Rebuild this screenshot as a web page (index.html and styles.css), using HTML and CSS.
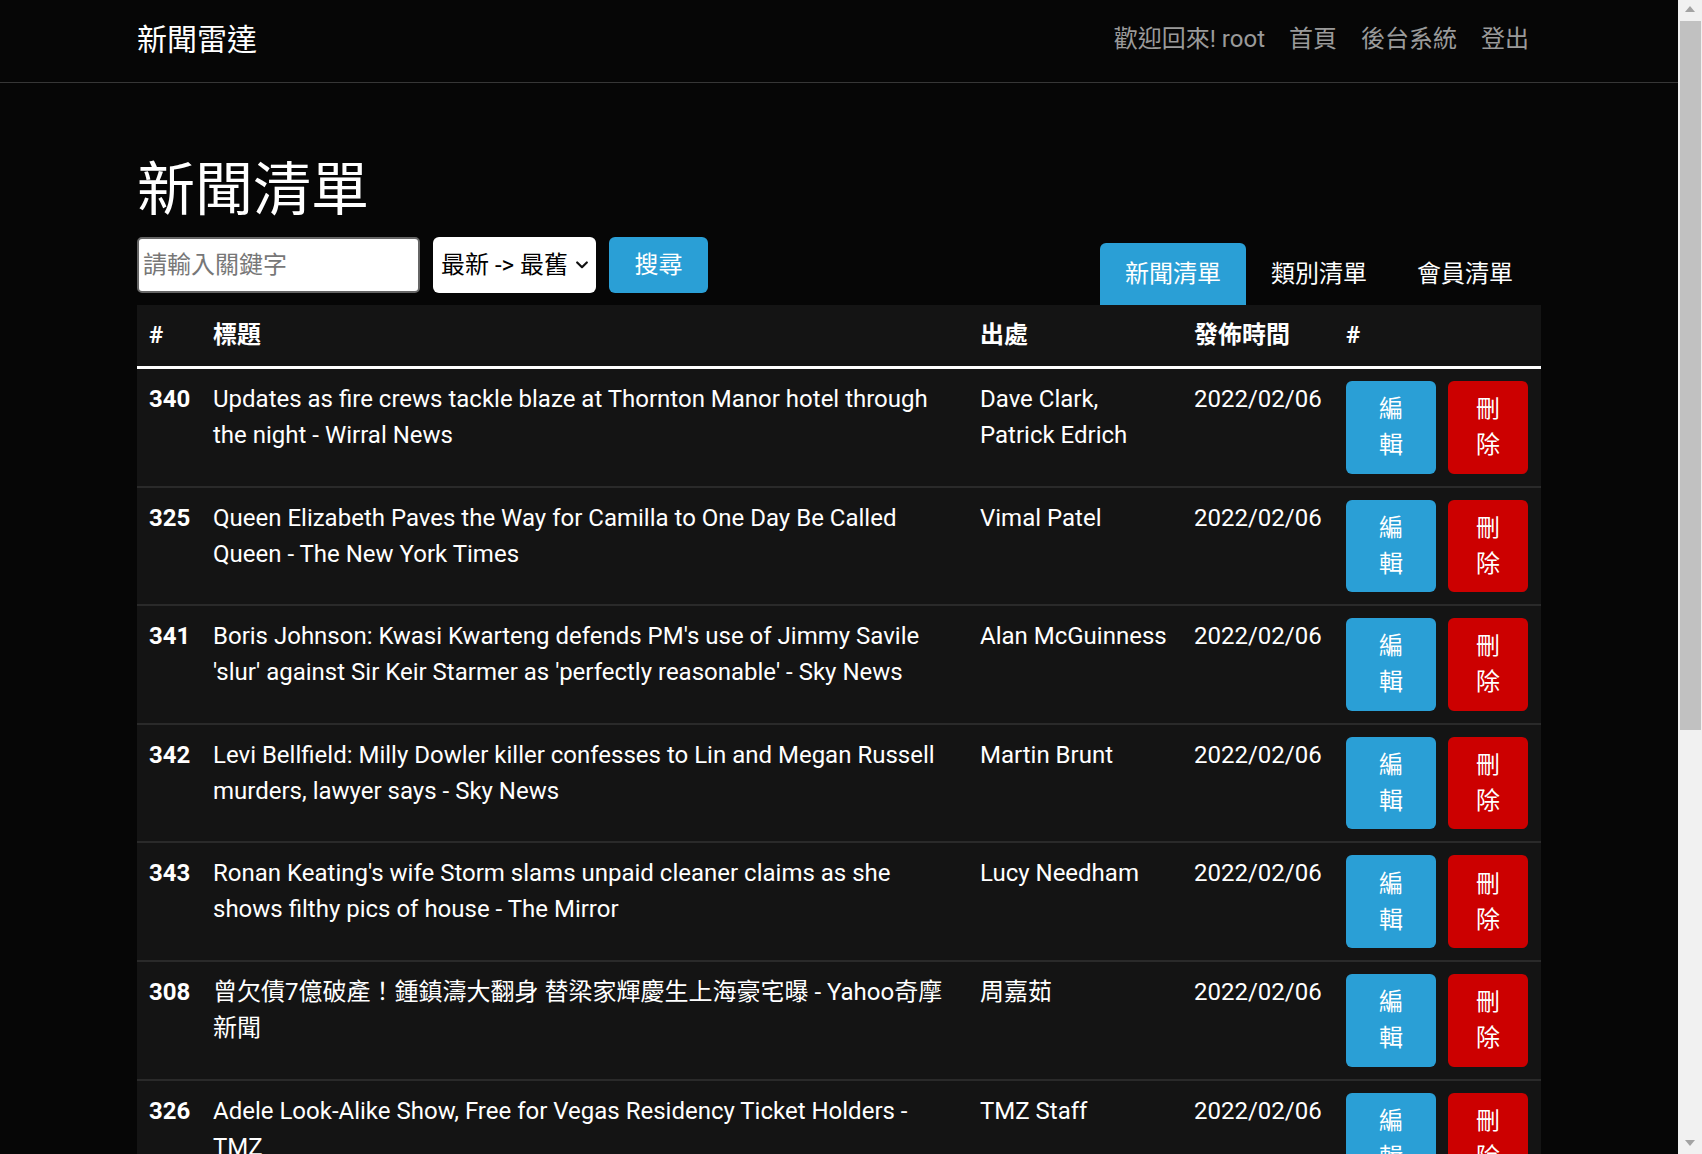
FILE: index.html
```html
<!DOCTYPE html>
<html lang="zh-Hant">
<head>
<meta charset="utf-8">
<title>新聞雷達</title>
<link rel="stylesheet" href="styles.css">
</head>
<body>
<nav class="navbar">
  <div class="navbar-inner">
    <a class="brand">新聞雷達</a>
    <div class="nav">
      <span class="nav-item">歡迎回來! root</span>
      <a class="nav-item">首頁</a>
      <a class="nav-item">後台系統</a>
      <a class="nav-item">登出</a>
    </div>
  </div>
</nav>

<main class="container">
  <h1 class="title">新聞清單</h1>
  <div class="toolbar">
    <form class="search">
      <input class="search-input" type="text" placeholder="請輸入關鍵字">
      <div class="select-wrap">
        <select class="sort-select">
          <option>最新 -&gt; 最舊</option>
          <option>最舊 -&gt; 最新</option>
        </select>
        <svg class="chevron" width="12" height="8" viewBox="0 0 12 8"><polyline points="1.2,1.5 6,6.2 10.8,1.5" fill="none" stroke="#111" stroke-width="2.2" stroke-linecap="round" stroke-linejoin="round"/></svg>
      </div>
      <button class="btn-search" type="button">搜尋</button>
    </form>
    <div class="tabs">
      <a class="tab active">新聞清單</a>
      <a class="tab">類別清單</a>
      <a class="tab">會員清單</a>
    </div>
  </div>

  <table class="news-table">
    <colgroup>
      <col class="c-id"><col class="c-title"><col class="c-src"><col class="c-date"><col class="c-act">
    </colgroup>
    <thead>
      <tr><th>#</th><th>標題</th><th>出處</th><th>發佈時間</th><th>#</th></tr>
    </thead>
    <tbody>
      <tr>
        <td class="num">340</td>
        <td>Updates as fire crews tackle blaze at Thornton Manor hotel through the night - Wirral News</td>
        <td>Dave Clark, Patrick Edrich</td>
        <td class="date">2022/02/06</td>
        <td><div class="actions"><button class="btn btn-edit">編輯</button><button class="btn btn-del">刪除</button></div></td>
      </tr>
      <tr>
        <td class="num">325</td>
        <td>Queen Elizabeth Paves the Way for Camilla to One Day Be Called Queen - The New York Times</td>
        <td>Vimal Patel</td>
        <td class="date">2022/02/06</td>
        <td><div class="actions"><button class="btn btn-edit">編輯</button><button class="btn btn-del">刪除</button></div></td>
      </tr>
      <tr>
        <td class="num">341</td>
        <td>Boris Johnson: Kwasi Kwarteng defends PM's use of Jimmy Savile 'slur' against Sir Keir Starmer as 'perfectly reasonable' - Sky News</td>
        <td>Alan McGuinness</td>
        <td class="date">2022/02/06</td>
        <td><div class="actions"><button class="btn btn-edit">編輯</button><button class="btn btn-del">刪除</button></div></td>
      </tr>
      <tr>
        <td class="num">342</td>
        <td>Levi Bellfield: Milly Dowler killer confesses to Lin and Megan Russell murders, lawyer says - Sky News</td>
        <td>Martin Brunt</td>
        <td class="date">2022/02/06</td>
        <td><div class="actions"><button class="btn btn-edit">編輯</button><button class="btn btn-del">刪除</button></div></td>
      </tr>
      <tr>
        <td class="num">343</td>
        <td>Ronan Keating's wife Storm slams unpaid cleaner claims as she shows filthy pics of house - The Mirror</td>
        <td>Lucy Needham</td>
        <td class="date">2022/02/06</td>
        <td><div class="actions"><button class="btn btn-edit">編輯</button><button class="btn btn-del">刪除</button></div></td>
      </tr>
      <tr>
        <td class="num">308</td>
        <td>曾欠債7億破產！鍾鎮濤大翻身 替梁家輝慶生上海豪宅曝 - Yahoo奇摩新聞</td>
        <td>周嘉茹</td>
        <td class="date">2022/02/06</td>
        <td><div class="actions"><button class="btn btn-edit">編輯</button><button class="btn btn-del">刪除</button></div></td>
      </tr>
      <tr>
        <td class="num">326</td>
        <td>Adele Look-Alike Show, Free for Vegas Residency Ticket Holders - TMZ</td>
        <td>TMZ Staff</td>
        <td class="date">2022/02/06</td>
        <td><div class="actions"><button class="btn btn-edit">編輯</button><button class="btn btn-del">刪除</button></div></td>
      </tr>
    </tbody>
  </table>
</main>

<div class="scrollbar" aria-hidden="true">
  <span class="sb-up"></span>
  <span class="sb-thumb"></span>
  <span class="sb-down"></span>
</div>
</body>
</html>
```
FILE: styles.css
```css
* { box-sizing: border-box; }

html { overflow: hidden; }

body {
  margin: 0 24px 0 0;
  background: #060606;
  color: #fff;
  font-family: Roboto, "Noto Sans CJK TC", sans-serif;
  font-size: 24px;
  line-height: 1.5;
}

a { text-decoration: none; color: inherit; }

/* ---------- navbar ---------- */
.navbar {
  height: 83px;
  border-bottom: 1px solid #363636;
}
.navbar-inner {
  width: 1404px;
  height: 100%;
  margin: 0 auto;
  padding-bottom: 4px;
  display: flex;
  align-items: center;
  justify-content: space-between;
}
.brand {
  font-size: 30px;
  line-height: 45px;
  color: #fff;
}
.nav { display: flex; }
.nav-item {
  padding: 0 12px;
  color: #9a9a9a;
}

/* ---------- main ---------- */
.container {
  width: 1404px;
  margin: 0 auto;
}
.title {
  margin: 72px 0 12px;
  font-size: 58px;
  line-height: 70px;
  font-weight: 400;
  color: #fff;
}

.toolbar {
  display: flex;
  justify-content: space-between;
  align-items: flex-end;
}
.search {
  display: flex;
  gap: 13px;
  margin: 0 0 12px;
}
.search-input {
  width: 283px;
  height: 56px;
  border: 2px solid #666;
  border-radius: 5px;
  padding: 0 4px;
  background: #fff;
  font: inherit;
  color: #222;
  outline: none;
}
.search-input::placeholder { color: #777; }

.select-wrap {
  position: relative;
  width: 163px;
  height: 56px;
}
.sort-select {
  appearance: none;
  -webkit-appearance: none;
  width: 100%;
  height: 100%;
  border: none;
  border-radius: 6px;
  background: #fff;
  color: #000;
  font: inherit;
  padding: 0 0 0 8px;
  outline: none;
}
.chevron {
  position: absolute;
  right: 8px;
  top: 24px;
  pointer-events: none;
}
.btn-search {
  width: 99px;
  height: 56px;
  border: none;
  border-radius: 6px;
  background: #2a9fd6;
  color: #fff;
  font: inherit;
}

.tabs {
  display: flex;
  margin-right: 3px;
}
.tab {
  width: 146px;
  padding: 13px 0;
  text-align: center;
  line-height: 36px;
  border-radius: 6px 6px 0 0;
  color: #fff;
}
.tab.active { background: #2a9fd6; }

/* ---------- table ---------- */
.news-table {
  width: 100%;
  table-layout: fixed;
  border-collapse: separate;
  border-spacing: 0;
  background: #141414;
}
.c-id { width: 64px; }
.c-title { width: 767px; }
.c-src { width: 214px; }
.c-date { width: 152px; }

.news-table th {
  padding: 12px 12px 13px;
  text-align: left;
  font-weight: 700;
  line-height: 36px;
  border-bottom: 3px solid #fff;
}
.news-table td {
  padding: 12px;
  vertical-align: top;
  line-height: 36px;
  border-bottom: 2px solid #2a2a2a;
}
.news-table td.num { font-weight: 700; }
.news-table td.date { white-space: nowrap; }

.actions {
  display: flex;
  gap: 12px;
}
.btn {
  border: none;
  border-radius: 6px;
  color: #fff;
  font: inherit;
  line-height: 36px;
  padding: 10.3px 0;
  text-align: center;
}
.btn-edit {
  width: 90px;
  padding-left: 33px;
  padding-right: 33px;
  background: #2a9fd6;
}
.btn-del {
  width: 80px;
  padding-left: 28px;
  padding-right: 28px;
  background: #cc0000;
}

/* ---------- fake scrollbar ---------- */
.scrollbar {
  position: fixed;
  top: 0;
  right: 0;
  width: 24px;
  height: 100%;
  background: #f1f1f1;
}
.sb-thumb {
  position: absolute;
  top: 21px;
  left: 2px;
  width: 21px;
  height: 709px;
  background: #c1c1c1;
}
.sb-up, .sb-down {
  position: absolute;
  left: 7px;
  width: 0;
  height: 0;
  border-left: 5px solid transparent;
  border-right: 5px solid transparent;
}
.sb-up {
  top: 6px;
  border-bottom: 6px solid #a3a3a3;
}
.sb-down {
  bottom: 8px;
  border-top: 6px solid #a3a3a3;
}
```
